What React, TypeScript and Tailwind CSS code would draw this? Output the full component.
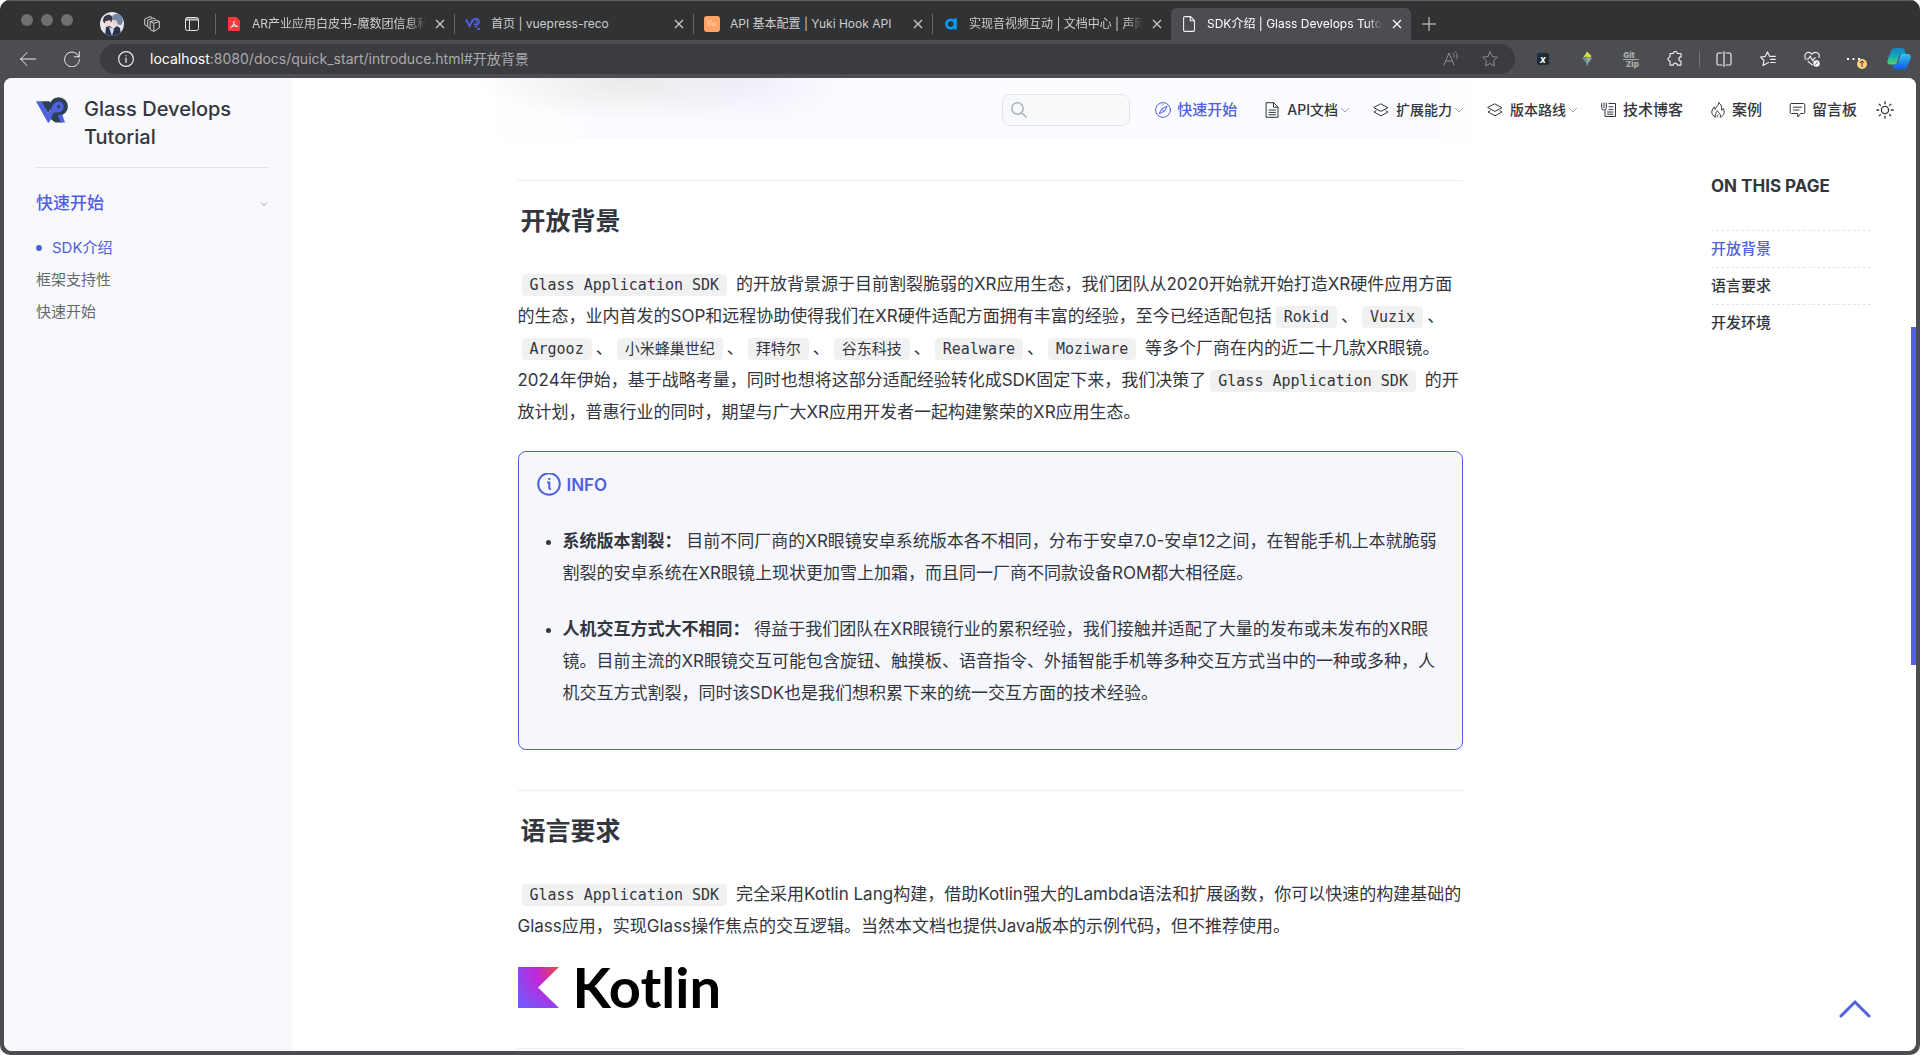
import React, { type ReactNode } from "react";

const sans = "font-['Inter','Noto_Sans_CJK_SC',sans-serif]";

type IconProps = { className?: string };

function Logo({ className = "" }: IconProps) {
  return (
    <svg viewBox="0 0 32 26" className={className} aria-hidden="true">
      <circle cx="22.600" cy="9.500" r="9.300" fill="#2b4158" />
      <path d="M5 4.300h8.300L16 8l-3.700 8.500z" fill="#2b4158" />
      <path d="M16 17h5.500L26 25.500h-6.500L14.500 22z" fill="#2b4158" />
      <path d="M0 4.300h5.300l7 12.200 5-9.300 3.700 8.200-3.700.4-4 9.700h-1.500z" fill="#5060e0" />
      <circle cx="22.300" cy="10" r="5.400" fill="#5060e0" />
      <circle cx="22.600" cy="9.600" r="1.500" fill="#2b4158" />
      <path d="m22 18.300 4.200-.8L29 25.500h-4.300z" fill="#5060e0" />
    </svg>
  );
}

function LogoMini() {
  return (
    <svg viewBox="0 0 16 14" className="h-3.5 w-4" fill="none" aria-hidden="true">
      <path d="M1 2.500 4.500 9l2.800-5c1-1.800 2.600-2.400 4.200-2.100 3 .6 3.200 5 0 5.500l-2.600.2" stroke="#5060e0" strokeWidth="2" />
      <circle cx="11.300" cy="4.500" r="1" fill="#5060e0" />
      <path d="M10 9h2.500v1.500H10zM12 11h2.600l.6 2h-2.600z" fill="#5060e0" />
    </svg>
  );
}

function Chevron({ className = "" }: IconProps) {
  return (
    <svg viewBox="0 0 10 6" className={className} fill="none" stroke="currentColor" aria-hidden="true">
      <path d="m1 1 4 4 4-4" />
    </svg>
  );
}

function Svg16({ children, className = "size-4" }: { children: ReactNode; className?: string }) {
  return (
    <svg
      viewBox="0 0 16 16"
      className={`shrink-0 ${className}`}
      fill="none"
      stroke="currentColor"
      strokeLinecap="round"
      strokeLinejoin="round"
      aria-hidden="true"
    >
      {children}
    </svg>
  );
}

const Layers = () => (
  <Svg16>
    <path d="m8 2 7 3.700-7 3.700-7-3.700zM3 8.800 1 10l7 3.800 7-3.800-2-1.200" />
  </Svg16>
);
const Compass = () => (
  <Svg16>
    <circle cx="8" cy="8" r="7.400" />
    <path d="m11.800 4.200-5.300 3-2.300 4.600 5-2.600zM6.600 7.200l2.300 2.200M8 2.200v.3" />
  </Svg16>
);
const Doc = () => (
  <Svg16>
    <path d="M2.500.7h7.300L14 5v10.300H2.500zM9.500.9v4.300h4.200M5 8h6.500M5 10.400h6.500M5 12.800h6.500" />
  </Svg16>
);
const Notes = () => (
  <Svg16>
    <path d="M8 1.500h6.500v13H4V9M.7 1.500v4.300a2.300 2.300 0 0 0 4.600 0V1M3 1v4.500M8 4.800h4M8 7.600h4M6.500 10h5.500M6.500 12.200h5.500" />
  </Svg16>
);
const Flame = () => (
  <Svg16>
    <path d="M9 .7C9.300 3 5.800 4.500 5.300 7.500 4.500 7 4.200 6 4.400 4.800 1.600 7.500 1.300 10.500 2.500 12.700c.7 1.300 1.700 2 3 2.500-1.300-3 .8-4.300 1.900-6.400.9 2.300 4.300 3.300 2.700 6.400 4.500-1.500 4.800-5.500 3.200-8.700-.5 1-1 1.500-1.800 1.600C12 5 11.300 2.300 9 .7zM7.500 15c-.5-1 .1-1.700.6-2.300" />
  </Svg16>
);
const Message = () => (
  <Svg16 className="h-4 w-[17px]">
    <path d="M2 1.500h12a1.300 1.300 0 0 1 1.300 1.300v7.400a1.300 1.300 0 0 1-1.300 1.300h-3L8.300 15l-.1-3.500H2A1.300 1.300 0 0 1 .7 10.200V2.800A1.300 1.300 0 0 1 2 1.500zM4 5.200h8M4 8h5.500" />
  </Svg16>
);
const Sun = () => (
  <svg viewBox="0 0 18 18" className="size-[18px]" fill="none" stroke="currentColor" strokeWidth="1.300" aria-hidden="true">
    <circle cx="9" cy="9" r="3.600" />
    <path d="M9 .3v2.900M9 14.800v2.900M.3 9h2.900M14.800 9h2.900M2.900 2.900l1.900 1.900M13.200 13.200l1.900 1.900M2.900 15.100l1.900-1.900M13.200 4.800l1.900-1.900" />
  </svg>
);

/* ---------- browser chrome ---------- */

const PdfIcon = () => (
  <svg viewBox="0 0 12 14" className="h-3.5 w-3" aria-hidden="true">
    <path d="M1 0h7.500L12 3.500V13a1 1 0 0 1-1 1H1a1 1 0 0 1-1-1V1a1 1 0 0 1 1-1z" fill="#f33b3b" />
    <path d="M2.500 11c1.800-1 3.500-4 3.600-7M6 6.500c.6 2 2 3.200 3.800 3.300M3.500 9.700c1.800-.8 3.800-1 5.800-.6" stroke="#fff" fill="none" />
  </svg>
);
const YukiIcon = () => (
  <span className="flex size-4 items-center justify-center rounded-[3px] bg-[#ffa466] text-[7px] text-[#ffe0c8]">Yu.</span>
);
const AgoraIcon = () => (
  <svg viewBox="0 0 12 12" className="size-3" fill="none" stroke="#099dfd" strokeWidth="2.600" aria-hidden="true">
    <circle cx="5.700" cy="6" r="4.200" />
    <path d="M10.500.5v11" />
  </svg>
);
const PageIcon = () => (
  <svg viewBox="0 0 12 16" className="h-4 w-3" fill="none" stroke="#f0f0f0" strokeWidth="1.100" aria-hidden="true">
    <path d="M2 .6h5.500l4 4v9.500a1.300 1.300 0 0 1-1.300 1.300H1.900a1.300 1.300 0 0 1-1.300-1.300V1.900A1.300 1.300 0 0 1 2 .6zM7.300.8v4h4" />
  </svg>
);

function Avatar() {
  return (
    <svg viewBox="0 0 24 24" className="size-6 rounded-full" aria-hidden="true">
      <rect width="24" height="24" fill="#e9e6ea" />
      <path d="M3 9c0-5 4-7 7-6 2 .6 3 2.500 2.500 5L10 12l-6-1z" fill="#3a3848" />
      <path d="M12 5c2-4 8-4.500 10 0 1.500 3 .5 7-1 8l-6-1z" fill="#7387a8" />
      <path d="M5 9.500 10 8l1.500 4-3 2.500L5 13z" fill="#f3dcd8" />
      <path d="m12.500 8 4 .5 1.500 4-4 1.500-2-2z" fill="#f0d5d2" />
      <path d="M5 24 6 15l4-1 3 3 4-3 3 2 1 8z" fill="#2a3350" />
      <path d="m9 15 3 9 2-7z" fill="#d9dbe6" />
    </svg>
  );
}

function Tab({ icon, title, active = false, fade = false }: { icon: ReactNode; title: string; active?: boolean; fade?: boolean }) {
  return (
    <div
      className={
        active
          ? "flex h-8 w-60 items-center rounded-t-md bg-[#4c4d51] pr-1 pl-2.5 text-white"
          : "flex h-8 w-[238px] items-center pr-1 pl-2.5 text-[#cbcccd]"
      }
    >
      <a href="#tab" className="flex min-w-0 flex-1 items-center gap-2.5">
        <span className="flex w-4 shrink-0 justify-center">{icon}</span>
        <span className={fade ? "flex-1 overflow-hidden whitespace-nowrap mask-r-from-90%" : "flex-1 overflow-hidden whitespace-nowrap"}>
          {title}
        </span>
      </a>
      <button aria-label="关闭标签页" className="ml-1 flex size-5 items-center justify-center">
        <svg viewBox="0 0 10 10" className="size-2.5" stroke="currentColor" strokeWidth="1.200" aria-hidden="true">
          <path d="m1 1 8 8M9 1 1 9" />
        </svg>
      </button>
    </div>
  );
}

const Divider = () => <span className="h-5 w-px shrink-0 bg-[#66686a]" />;

function TabStrip() {
  return (
    <div className="flex h-10 items-end border-t border-[#5d5f61] bg-[#313234] text-xs">
      <div className="flex h-8 w-[215px] shrink-0 items-center pl-[21px]">
        <div className="flex gap-2 pb-2">
          <span className="size-3 rounded-full bg-[#6e6f71]" />
          <span className="size-3 rounded-full bg-[#6e6f71]" />
          <span className="size-3 rounded-full bg-[#6e6f71]" />
        </div>
        <button aria-label="个人资料" className="ml-[27px]">
          <Avatar />
        </button>
        <button aria-label="工作区" className="ml-5 text-[#cfcfd0]">
          <Svg16>
            <path d="M6.500 5.500 12 4l3.300 1.500V12L10 15.400l-3.500-1.600zM6.500 5.500 9.800 7.300V15M9.800 7.300l5.300-1.600M6 12.500l-2.300-1.300V4.300L9 2l2 .8M3 10 .7 8.800V3L6 .7l1.600.5" />
          </Svg16>
        </button>
        <button aria-label="标签页操作菜单" className="ml-6 text-[#e0e0e0]">
          <Svg16>
            <rect x="1.500" y="1.500" width="13" height="13" rx="2" />
            <path d="M1.500 4h13M1.500 3h13M5.500 4v10.500" />
          </Svg16>
        </button>
      </div>
      <div className="flex h-8 items-center">
        <Divider />
        <Tab icon={<PdfIcon />} title="AR产业应用白皮书-魔数团信息科技" fade />
        <Divider />
        <Tab icon={<LogoMini />} title="首页 | vuepress-reco" />
        <Divider />
        <Tab icon={<YukiIcon />} title="API 基本配置 | Yuki Hook API" />
        <Divider />
        <Tab icon={<AgoraIcon />} title="实现音视频互动 | 文档中心 | 声网" fade />
        <Tab icon={<PageIcon />} title="SDK介绍 | Glass Develops Tutorial" active fade />
      </div>
      <button aria-label="新建标签页" className="flex h-8 w-9 items-center justify-center text-[#d8d8d8]">
        <svg viewBox="0 0 14 14" className="size-3.5" stroke="currentColor" aria-hidden="true">
          <path d="M7 0v14M0 7h14" />
        </svg>
      </button>
    </div>
  );
}

function ToolButton({ label, children, className = "w-11" }: { label: string; children: ReactNode; className?: string }) {
  return (
    <button aria-label={label} className={`flex h-8 shrink-0 items-center justify-center ${className}`}>
      {children}
    </button>
  );
}

function Toolbar() {
  return (
    <div className="flex h-[38px] items-center bg-[#4c4d51] pl-1.5 text-[#ececec]">
      <ToolButton label="返回">
        <Svg16>
          <path d="M15.500 8H.7M7 1.500.6 8 7 14.500" />
        </Svg16>
      </ToolButton>
      <ToolButton label="刷新">
        <Svg16>
          <path d="M15 6A7.400 7.400 0 1 0 15.400 8.500M15.300.8v5h-5" />
        </Svg16>
      </ToolButton>
      <div className="ml-1.5 flex h-[30px] flex-1 items-center rounded-full bg-[#3b3c40] pr-[17px] pl-[18px]">
        <button aria-label="站点信息">
          <Svg16>
            <circle cx="8" cy="8" r="7.400" strokeWidth="1.200" />
            <path d="M8 7v4.500M8 4.500v.3" strokeWidth="1.200" />
          </Svg16>
        </button>
        <div className="ml-4 flex-1 text-sm text-[#a9aaac]">
          <span className="text-white">localhost</span>:8080/docs/quick_start/introduce.html#开放背景
        </div>
        <button aria-label="朗读此页" className="text-[#8b8c8f]">
          <Svg16>
            <path d="m1 14 5-12 5 12M2.800 10h6.500M10 2.200c1 1 1.300 2.300 1 3.600M12.400.8c1.800 2 2.200 4.400 1.300 7" />
          </Svg16>
        </button>
        <button aria-label="收藏" className="ml-[23px] text-[#8b8c8f]">
          <Svg16>
            <path d="m8 .8 2.200 4.700 5.100.7-3.700 3.600.9 5.200L8 12.500 3.500 15l.9-5.200L.7 6.200l5.100-.7z" />
          </Svg16>
        </button>
      </div>
      <div className="flex items-center pl-1.5">
        <ToolButton label="扩展 X">
          <span className="flex size-3 items-center justify-center rounded-xs bg-[#1c2d38] text-[10px] font-bold text-white italic">x</span>
        </ToolButton>
        <ToolButton label="扩展 Kite">
          <svg viewBox="0 0 12 16" className="h-4 w-3" aria-hidden="true">
            <path d="M6 .5 10.500 5 9 7H2z" fill="#d8dc3c" />
            <path d="M1 7l4-1.500L11 7l-4 5-1 3.500L5 12z" fill="#6f8d8a" />
            <path d="M6 6l5 1-4 5-1 3.500z" fill="#91a9a0" />
          </svg>
        </ToolButton>
        <ToolButton label="GitZip">
          <span className="flex flex-col text-[8px] leading-2 font-black text-[#a6a7a9]">
            <span className="border-b border-[#a6a7a9] pr-1">Git</span>
            <span className="text-right">Zip</span>
          </span>
        </ToolButton>
        <ToolButton label="扩展">
          <Svg16>
            <path strokeWidth="1.200" d="M3 2.500h3.300a2 2 0 0 1 4 0H14v3.400a2 2 0 0 0 0 4.200v4H10.300a2 2 0 0 0-4 0H3V10a2 2 0 0 1 0-4z" />
          </Svg16>
        </ToolButton>
        <span className="mx-0.5 h-4 w-px bg-[#737478]" />
        <ToolButton label="分屏">
          <Svg16>
            <path strokeWidth="1.200" d="M6 2H2.500A1.500 1.500 0 0 0 1 3.500v9A1.500 1.500 0 0 0 2.500 14H6M10 2h3.500A1.500 1.500 0 0 1 15 3.500v9a1.500 1.500 0 0 1-1.500 1.500H10M8 .6v14.800" />
          </Svg16>
        </ToolButton>
        <ToolButton label="收藏夹">
          <Svg16>
            <path strokeWidth="1.200" d="M8.500 11.500 3 14.500l1-5L.7 6l4.600-.7L7.500.8l2 4.500h5.800M10.500 8.300h4.800M10.500 11.500h4.800" />
          </Svg16>
        </ToolButton>
        <ToolButton label="浏览器概要">
          <Svg16>
            <path strokeWidth="1.200" d="M8.500 14 6.500 12.600 4 10.300M1.200 6.500C.3 3.500 2 1.300 4.300 1.300 6 1.300 7.200 2 8 3.300c.8-1.300 2-2 3.700-2 2.600 0 4.300 2.500 3.200 5.200M.8 8h3.700l1.700-3 2.500 5 1.600-3h1.200" />
            <circle cx="12.500" cy="12.500" r="3.200" fill="#fff" stroke="none" />
            <path d="m11.200 13.500 2.400-2.200" stroke="#4c4d51" />
          </Svg16>
        </ToolButton>
        <ToolButton label="设置及其他">
          <svg viewBox="0 0 24 20" className="h-5 w-6" aria-hidden="true">
            <path d="M3 9h2v2H3zM8.500 9h2v2h-2zM14 9h2v2h-2z" fill="#fff" />
            <circle cx="18" cy="15" r="5" fill="#ffd27a" />
            <path d="M18 18v-6m-2.200 2 2.200-2.200 2.200 2.200" stroke="#3b3420" fill="none" />
          </svg>
        </ToolButton>
        <ToolButton label="Copilot" className="w-[42px]">
          <svg viewBox="0 0 24 24" className="size-6" aria-hidden="true">
            <defs>
              <linearGradient id="cpA" x1="0" y1="0" x2="0" y2="1">
                <stop offset="0" stopColor="#1583c8" />
                <stop offset=".5" stopColor="#18a8b8" />
                <stop offset="1" stopColor="#55d66c" />
              </linearGradient>
              <linearGradient id="cpB" x1="0" y1="0" x2="0" y2="1">
                <stop offset="0" stopColor="#34c3f2" />
                <stop offset="1" stopColor="#1554d8" />
              </linearGradient>
            </defs>
            <path d="M8 1h7c2 0 2.600 1 3 3l.8 3h-4c-2 0-2.700 1-3.200 3L10 15.500c-.5 1.400-1.400 2-3 2H3C1 17.500 0 16 .5 13.500L4 4c.8-2 2-3 4-3z" fill="url(#cpA)" />
            <path d="M16 23H9c-2 0-2.600-1-3-3l-.6-2.500H8c2 0 2.800-1 3.300-3L13 9c.5-1.400 1.500-2 3-2h5c2 0 3.300 1.500 2.800 4L20 20c-.8 2-2 3-4 3z" fill="url(#cpB)" />
          </svg>
        </ToolButton>
      </div>
    </div>
  );
}

/* ---------- site ---------- */

function Sidebar() {
  return (
    <aside className="w-72 shrink-0 bg-[#f8f9fc] pt-[17px] pr-6 pl-8">
      <a href="#home" className="flex gap-4 border-b border-[#e4e5e8] pb-4">
        <Logo className="mt-0.5 h-[26px] w-8 shrink-0" />
        <span className="text-xl leading-7 font-medium text-[#33363d]">Glass Develops Tutorial</span>
      </a>
      <button className="mt-5 flex h-8 w-full items-center justify-between text-[17px] font-medium text-[#5060e0]">
        快速开始
        <Chevron className="h-1.5 w-2 text-[#8e9096]" />
      </button>
      <nav aria-label="章节" className="mt-3 flex flex-col text-[15px] leading-8 text-[#66686d]">
        <a href="#sdk" className="flex items-center gap-2.5 text-[#5060e0]">
          <span className="size-1.5 rounded-full bg-[#5060e0]" />
          SDK介绍
        </a>
        <a href="#framework">框架支持性</a>
        <a href="#start">快速开始</a>
      </nav>
    </aside>
  );
}

function NavLink({ icon, label, active = false }: { icon: ReactNode; label: string; active?: boolean }) {
  return (
    <a
      href="#nav"
      className={
        active
          ? "flex items-center gap-1.5 pr-1 text-[15px] font-medium text-[#5060e0]"
          : "flex items-center gap-1.5 pr-1 text-[15px] font-medium"
      }
    >
      {icon}
      {label}
    </a>
  );
}

function NavMenu({ icon, label }: { icon: ReactNode; label: string }) {
  return (
    <button className="flex items-center gap-[7px] text-sm font-medium">
      {icon}
      <span className="flex items-center gap-0.5">
        {label}
        <Chevron className="h-1.5 w-2.5 text-[#a4a6aa]" />
      </span>
    </button>
  );
}

function Header() {
  return (
    <header className="flex h-16 shrink-0 items-center justify-end bg-[radial-gradient(150px_44px_at_335px_0px,#e9e9ea,#e9e9ea00),radial-gradient(110px_52px_at_450px_0px,#eeeefb,#eeeefb00),linear-gradient(90deg,#fff_180px,#fbfcff_300px,#fbfcff_1140px,#fff_1190px)] pr-[22px] text-[#33363d]">
      <label className="mr-[25px] flex h-8 w-32 items-center rounded-lg border border-[#e4e5e8] bg-[#f8f9fb] pl-2">
        <svg viewBox="0 0 16 16" className="size-4 shrink-0" fill="none" stroke="#a5b2c0" strokeWidth="1.500" aria-hidden="true">
          <circle cx="6.500" cy="6.500" r="5.700" />
          <path d="m10.700 10.700 4.800 4.800" />
        </svg>
        <input type="text" aria-label="搜索" className="w-full min-w-0 bg-transparent px-2 text-sm outline-none" />
      </label>
      <nav aria-label="主导航" className="flex items-center gap-[23px]">
        <NavLink icon={<Compass />} label="快速开始" active />
        <NavMenu icon={<Doc />} label="API文档" />
        <NavMenu icon={<Layers />} label="扩展能力" />
        <NavMenu icon={<Layers />} label="版本路线" />
        <NavLink icon={<Notes />} label="技术博客" />
        <NavLink icon={<Flame />} label="案例" />
        <NavLink icon={<Message />} label="留言板" />
      </nav>
      <button aria-label="切换主题" className="ml-[15px]">
        <Sun />
      </button>
    </header>
  );
}

function Code({ children }: { children: ReactNode }) {
  return (
    <code className="mx-1 rounded bg-[#f1f1f1] px-2 py-0.5 font-['DejaVu_Sans_Mono','Noto_Sans_CJK_SC',monospace] text-[15px] leading-4 whitespace-nowrap">
      {children}
    </code>
  );
}

function Heading({ id, children }: { id: string; children: ReactNode }) {
  return (
    <h2 id={id} className="border-t border-[#eaecef] pt-6 pl-[3px] text-[25px] leading-8 font-semibold">
      {children}
    </h2>
  );
}

function KotlinLogo() {
  return (
    <div className="mt-6 flex h-[42px] items-center gap-3.5 text-black">
      <svg viewBox="0 0 41 41" className="size-[41px]" aria-hidden="true">
        <defs>
          <radialGradient id="kt" cx=".97" cy=".04" r="1.200">
            <stop offset="0" stopColor="#e8484f" />
            <stop offset=".45" stopColor="#c026d8" />
            <stop offset="1" stopColor="#7657fa" />
          </radialGradient>
        </defs>
        <path d="M0 0h41L20 20.500 41 41H0z" fill="url(#kt)" />
      </svg>
      <span className="font-['Lato',sans-serif] text-[56px] leading-none font-bold">Kotlin</span>
    </div>
  );
}

function Article() {
  return (
    <main className="min-w-0 flex-1 text-[17px] leading-8 text-[#33363d]">
      <article className="mx-auto max-w-[945px] pt-[38px]">
        <section>
          <Heading id="background">开放背景</Heading>
          <p className="mt-[31px]">
            <Code>Glass Application SDK</Code> 的开放背景源于目前割裂脆弱的XR应用生态，我们团队从2020开始就开始打造XR硬件应用方面的生态，业内首发的SOP和远程协助使得我们在XR硬件适配方面拥有丰富的经验，至今已经适配包括<Code>Rokid</Code>、<Code>Vuzix</Code>、<Code>Argooz</Code>、<Code>小米蜂巢世纪</Code>、<Code>拜特尔</Code>、<Code>谷东科技</Code>、<Code>Realware</Code>、<Code>Moziware</Code> 等多个厂商在内的近二十几款XR眼镜。
            <br />
            2024年伊始，基于战略考量，同时也想将这部分适配经验转化成SDK固定下来，我们决策了<Code>Glass Application SDK</Code> 的开放计划，普惠行业的同时，期望与广大XR应用开发者一起构建繁荣的XR应用生态。
          </p>
          <div className="mt-[23px] rounded-lg border border-[#5060e0] bg-[#f6f7fd] pt-[17px] pr-6 pb-10 pl-[18px]">
            <p className="flex items-center gap-1.5 font-semibold text-[#5060e0]">
              <svg viewBox="0 0 24 24" className="size-6" fill="none" stroke="currentColor" strokeWidth="2" aria-hidden="true">
                <circle cx="12" cy="11" r="10.800" />
                <path d="M10 9.500h2.300v5.500c0 .8.600 1.200 1.700.8M11.300 6h2" />
              </svg>
              INFO
            </p>
            <ul className="mt-6 flex list-disc flex-col gap-6 pl-[26px]">
              <li>
                <strong className="font-semibold">系统版本割裂：</strong> 目前不同厂商的XR眼镜安卓系统版本各不相同，分布于安卓7.0-安卓12之间，在智能手机上本就脆弱割裂的安卓系统在XR眼镜上现状更加雪上加霜，而且同一厂商不同款设备ROM都大相径庭。
              </li>
              <li>
                <strong className="font-semibold">人机交互方式大不相同：</strong> 得益于我们团队在XR眼镜行业的累积经验，我们接触并适配了大量的发布或未发布的XR眼镜。目前主流的XR眼镜交互可能包含旋钮、触摸板、语音指令、外插智能手机等多种交互方式当中的一种或多种，人机交互方式割裂，同时该SDK也是我们想积累下来的统一交互方面的技术经验。
              </li>
            </ul>
          </div>
        </section>
        <section className="mt-10">
          <Heading id="language">语言要求</Heading>
          <p className="mt-[31px]">
            <Code>Glass Application SDK</Code> 完全采用Kotlin Lang构建，借助Kotlin强大的Lambda语法和扩展函数，你可以快速的构建基础的Glass应用，实现Glass操作焦点的交互逻辑。当然本文档也提供Java版本的示例代码，但不推荐使用。
          </p>
          <KotlinLogo />
        </section>
        <hr className="mt-10 border-[#eaecef]" />
      </article>
    </main>
  );
}

function Toc() {
  return (
    <aside className="w-[228px] shrink-0 pt-7 pr-[45px] pl-[23px] text-[#33363d]">
      <h3 className="text-[17px] leading-8 font-bold">ON THIS PAGE</h3>
      <nav aria-label="本页目录" className="mt-7 flex flex-col text-[15px] leading-9 font-medium">
        <a href="#background" className="border-t border-dashed border-[#e4e5e8] text-[#5060e0]">
          开放背景
        </a>
        <a href="#language" className="border-t border-dashed border-[#e4e5e8]">
          语言要求
        </a>
        <a href="#environment" className="border-t border-dashed border-[#e4e5e8]">
          开发环境
        </a>
      </nav>
    </aside>
  );
}

export default function App() {
  return (
    <div className={`h-screen bg-white ${sans}`}>
      <div className="flex h-full flex-col overflow-hidden rounded-[10px] bg-[#4c4d51]">
        <TabStrip />
        <Toolbar />
        <div className="min-h-0 flex-1 px-1 pb-1">
          <div className="relative flex h-full overflow-hidden rounded-lg bg-white">
            <Sidebar />
            <div className="flex min-w-0 flex-1 flex-col">
              <Header />
              <div className="flex min-h-0 flex-1 overflow-hidden">
                <Article />
                <Toc />
              </div>
            </div>
            <div className="absolute top-[249px] right-0 h-[338px] w-[5px] bg-[#5060e0]" />
            <button aria-label="返回顶部" className="absolute right-[45px] bottom-8">
              <svg viewBox="0 0 32 20" className="h-5 w-8" fill="none" stroke="#5060e0" strokeWidth="3" strokeLinecap="round" aria-hidden="true">
                <path d="m2 17 14-14 14 14" />
              </svg>
            </button>
          </div>
        </div>
      </div>
    </div>
  );
}
